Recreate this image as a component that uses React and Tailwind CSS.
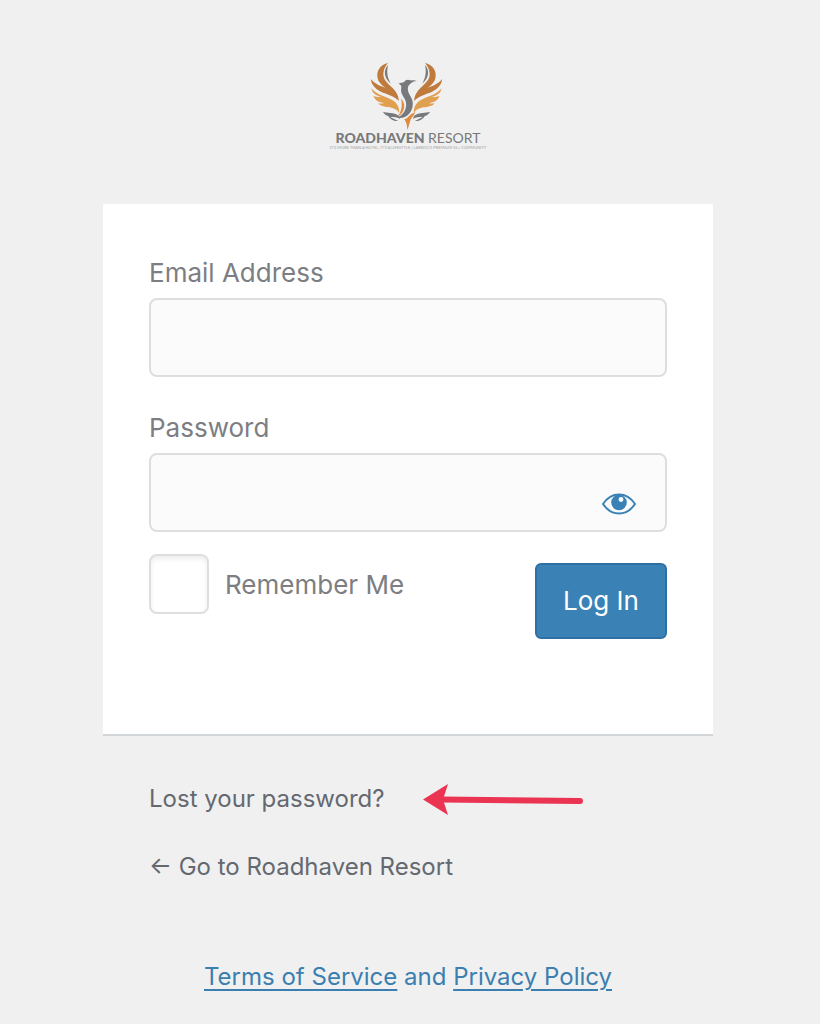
import React, { useState } from 'react';

function Logo() {
    return (
        <div className="flex flex-col items-center">
            <svg width="73" height="67" viewBox="0 0 218 201" aria-hidden="true" className="mr-1">
                {/* wings, left one mirrored for the right side */}
                {[0, 1].map(side => (
                    <g key={side} transform={side ? 'translate(218 0) scale(-1 1)' : undefined}>
                        <path fill="#bf7a3c" d="M54 0C30 5 18 24 22 44C24 56 34 66 46 74C24 68 10 58 2 48C4 66 16 78 32 86C50 94 72 98 86 114C86 96 76 82 60 68C44 54 38 44 40 28C42 15 47 7 54 0Z" />
                        <path fill="#e0a050" d="M4 76C6 92 18 98 34 102C26 103 18 102 10 98C14 112 26 118 42 120C36 122 30 122 24 121C34 132 50 132 64 134C74 136 82 140 87 150C88 130 78 116 60 108C40 99 18 94 4 76Z" />
                        <path fill="#77797c" d="M54 6C38 22 42 46 62 62C52 44 48 26 54 6ZM38 146C52 151 70 146 86 158L90 168C80 162 72 162 60 162L84 174C68 176 58 166 54 159C47 157 42 152 38 146Z" />
                    </g>
                ))}
                <path fill="#77797c" d="M139 54C132 50 126 53 120 52C114 48 106 50 102 57C97 60 91 59 85 62C92 64 95 68 93 77C90 96 108 104 108 124C108 142 98 156 82 164C104 170 128 150 128 122C128 102 112 94 113 76C114 64 126 56 139 54Z" />
                <path fill="#df8b3f" d="M92 106C108 122 106 148 82 162C94 146 98 126 92 106ZM136 148C128 162 124 164 121 172C117 184 115 194 111 201C111 188 110 180 102 168C109 170 112 162 120 156C126 152 130 150 136 148Z" />
            </svg>
            <p className="font-[Lato] text-[14px] leading-4 text-[#77797c]">
                <span className="font-black">ROADHAVEN</span> RESORT
            </p>
            <p className="font-[Lato] text-[4px] leading-[4px] text-[#a0a4a8]">
                IT'S MORE THAN A HOTEL, IT'S A LIFESTYLE | LAREDO'S PREMIUM 55+ COMMUNITY
            </p>
        </div>
    );
}

function EyeIcon() {
    return (
        <svg width="34" height="22" viewBox="0 0 34 22" aria-hidden="true">
            <path d="M1 11C5 5 10 1.500 17 1.500S29 5 33 11C29 17 24 20.500 17 20.500S5 17 1 11Z" fill="none" stroke="#3a82b6" strokeWidth="2" />
            <circle cx="17" cy="9.500" r="7.800" fill="#3a82b6" />
            <circle cx="19" cy="6.500" r="2.400" fill="#fbfbfb" />
        </svg>
    );
}

export default function LoginPage() {
    const [email, setEmail] = useState('');
    const [password, setPassword] = useState('');
    const [remember, setRemember] = useState(false);
    const [visible, setVisible] = useState(false);

    const handleSubmit = (e) => {
        e.preventDefault();
    };

    return (
        <div className="min-h-screen bg-[#f0f0f0] pt-[63px] pr-1 pb-8 font-[Inter,sans-serif] text-[26px] leading-8 text-[#646970]">
            <main className="mx-auto w-full max-w-[610px]">
                <h1 className="mb-[54px]">
                    <Logo />
                </h1>

                <form onSubmit={handleSubmit} className="border-b-2 border-[#d3d6d9] bg-white px-[46px] pt-[53px] pb-[95px] text-[#7c7e82]">
                    <label htmlFor="email" className="block">Email Address</label>
                    <input
                        id="email"
                        type="email"
                        value={email}
                        onChange={e => setEmail(e.target.value)}
                        className="mt-[9px] block h-[79px] w-full rounded-lg border-2 border-[#dedede] bg-[#fbfbfb] px-4"
                    />

                    <label htmlFor="password" className="mt-[35px] block">Password</label>
                    <div className="relative mt-[9px]">
                        <input
                            id="password"
                            type={visible ? 'text' : 'password'}
                            value={password}
                            onChange={e => setPassword(e.target.value)}
                            className="block h-[79px] w-full rounded-lg border-2 border-[#dedede] bg-[#fbfbfb] pr-20 pl-4"
                        />
                        <button
                            type="button"
                            aria-label="Show password"
                            onClick={() => setVisible(!visible)}
                            className="absolute right-[31px] bottom-[17px]"
                        >
                            <EyeIcon />
                        </button>
                    </div>

                    <div className="mt-[22px] flex items-start justify-between">
                        <div className="flex items-center gap-4">
                            <input
                                id="remember"
                                type="checkbox"
                                checked={remember}
                                onChange={e => setRemember(e.target.checked)}
                                className="size-[60px] appearance-none rounded-lg border-2 border-[#dedede] bg-white shadow-[inset_0_3px_5px_rgba(0,0,0,0.07)] checked:bg-[#3a82b6]"
                            />
                            <label htmlFor="remember" className="pt-0.5">Remember Me</label>
                        </div>
                        <button
                            type="submit"
                            className="mt-[9px] h-[76px] w-[132px] rounded-md border-2 border-[#2e70a4] bg-[#3a82b6] text-white"
                        >
                            Log In
                        </button>
                    </div>
                </form>

                <nav className="mt-[47px] px-[46px] text-2xl leading-8">
                    <div className="flex items-center gap-[38px]">
                        <a href="#lost">Lost your password?</a>
                        <svg width="160" height="32" viewBox="0 0 160 32" aria-hidden="true">
                            <path d="M18 16.500L157 18" stroke="#eb3352" strokeWidth="6" strokeLinecap="round" />
                            <path d="M0 16.500L25 1L20 16.500L25 32Z" fill="#eb3352" />
                        </svg>
                    </div>
                    <a href="#home" className="mt-9 block">← Go to Roadhaven Resort</a>
                </nav>

                <p className="mt-[78px] text-center text-2xl leading-8 text-[#3a7fb0]">
                    <a href="#terms" className="underline decoration-2 underline-offset-4">Terms of Service</a> and{' '}
                    <a href="#privacy" className="underline decoration-2 underline-offset-4">Privacy Policy</a>
                </p>
            </main>
        </div>
    );
}
